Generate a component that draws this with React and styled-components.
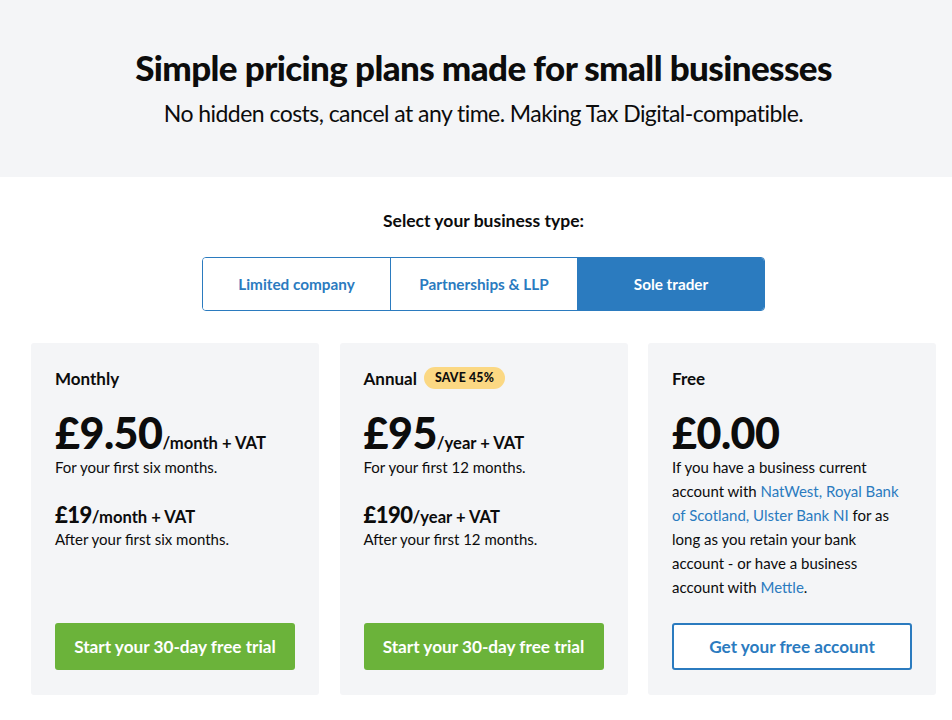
import React, { useState } from 'react';
import styled, { createGlobalStyle } from 'styled-components';

const GlobalStyle = createGlobalStyle`
  body {
    margin: 0;
    font-family: Lato, "Noto Sans", sans-serif;
    color: #0c0c0c;
    background: #fff;
  }
  * { box-sizing: border-box; }
`;

const Hero = styled.header`
  background: #f4f5f7;
  height: 177px;
  padding: 45px 16px 0 31px;
  text-align: center;
`;

const Title = styled.h1`
  margin: 0;
  font-size: 35px;
  font-weight: 900;
  line-height: 44px;
  letter-spacing: -0.6px;
`;

const Subtitle = styled.p`
  margin: 8px 0 0;
  font-size: 23px;
  line-height: 32px;
  letter-spacing: -0.55px;
`;

const Main = styled.main`
  padding: 33px 16px 0 31px;
`;

const Label = styled.h2`
  margin: 0;
  text-align: center;
  font-size: 17.5px;
  font-weight: 700;
  line-height: 22px;
`;

const Tabs = styled.div`
  margin: 25px auto 0;
  width: 563px;
  display: grid;
  grid-template-columns: repeat(3, 1fr);
  border: 1px solid #2b7bbf;
  border-radius: 4px;
  overflow: hidden;
`;

const Tab = styled.button`
  height: 52px;
  border: 0;
  border-left: ${({ $first }) => ($first ? '0' : '1px solid #2b7bbf')};
  background: ${({ $active }) => ($active ? '#2b7bbf' : '#fff')};
  color: ${({ $active }) => ($active ? '#fff' : '#2b7bbf')};
  font-family: inherit;
  font-size: 15.3px;
  font-weight: 700;
  cursor: pointer;
`;

const Cards = styled.div`
  margin-top: 32px;
  display: grid;
  grid-template-columns: repeat(3, 288px);
  justify-content: space-between;
`;

const Card = styled.section`
  background: #f4f5f7;
  border-radius: 3px;
  height: 352px;
  padding: 23px 24px 25px;
  display: flex;
  flex-direction: column;
`;

const PlanName = styled.h3`
  margin: 0;
  height: 24px;
  display: flex;
  align-items: center;
  gap: 7px;
  font-size: 17px;
  font-weight: 700;
`;

const Badge = styled.span`
  background: #fbd883;
  border-radius: 11px;
  padding: 0 11px;
  height: 22px;
  line-height: 22px;
  font-size: 12.3px;
  font-weight: 900;
  letter-spacing: 0.2px;
`;

const Price = styled.div`
  margin-top: 21px;
  line-height: 44px;
  font-size: 43px;
  font-weight: 900;
  letter-spacing: -0.5px;

  ${({ $small }) => $small && `
    margin-top: 24px;
    font-size: 22px;
    line-height: 24px;
  `}
`;

const Per = styled.span`
  font-size: 16.6px;
  font-weight: 700;
  line-height: 1;
  letter-spacing: 0;
`;

const Note = styled.p`
  margin: 0;
  font-size: 15px;
  line-height: 24px;
`;

const Link = styled.a`
  color: #2b7bbf;
  text-decoration: none;
`;

const Action = styled.a`
  margin-top: auto;
  width: 240px;
  height: 47px;
  border-radius: 3px;
  display: flex;
  align-items: center;
  justify-content: center;
  font-size: 17.2px;
  font-weight: 700;
  text-decoration: none;
  background: ${({ $outline }) => ($outline ? '#fff' : '#6bb33a')};
  color: ${({ $outline }) => ($outline ? '#2b7bbf' : '#fff')};
  border: ${({ $outline }) => ($outline ? '2px solid #2b7bbf' : '0')};
`;

const types = ['Limited company', 'Partnerships & LLP', 'Sole trader'];

export default function App() {
  const [active, setActive] = useState('Sole trader');

  return (
    <>
      <GlobalStyle />
      <Hero>
        <Title>Simple pricing plans made for small businesses</Title>
        <Subtitle>No hidden costs, cancel at any time. Making Tax Digital-compatible.</Subtitle>
      </Hero>
      <Main>
        <Label>Select your business type:</Label>
        <Tabs>
          {types.map((t, i) => (
            <Tab key={t} $first={i === 0} $active={active === t} onClick={() => setActive(t)}>
              {t}
            </Tab>
          ))}
        </Tabs>
        <Cards>
          <Card>
            <PlanName>Monthly</PlanName>
            <Price>£9.50<Per>/month + VAT</Per></Price>
            <Note>For your first six months.</Note>
            <Price $small>£19<Per>/month + VAT</Per></Price>
            <Note>After your first six months.</Note>
            <Action href="#">Start your 30-day free trial</Action>
          </Card>
          <Card>
            <PlanName>Annual <Badge>SAVE 45%</Badge></PlanName>
            <Price>£95<Per>/year + VAT</Per></Price>
            <Note>For your first 12 months.</Note>
            <Price $small>£190<Per>/year + VAT</Per></Price>
            <Note>After your first 12 months.</Note>
            <Action href="#">Start your 30-day free trial</Action>
          </Card>
          <Card>
            <PlanName>Free</PlanName>
            <Price>£0.00</Price>
            <Note>
              If you have a business current account with{' '}
              <Link href="#">NatWest, Royal Bank of Scotland, Ulster Bank NI</Link> for as long as you
              retain your bank account - or have a business account with <Link href="#">Mettle</Link>.
            </Note>
            <Action href="#" $outline>Get your free account</Action>
          </Card>
        </Cards>
      </Main>
    </>
  );
}
